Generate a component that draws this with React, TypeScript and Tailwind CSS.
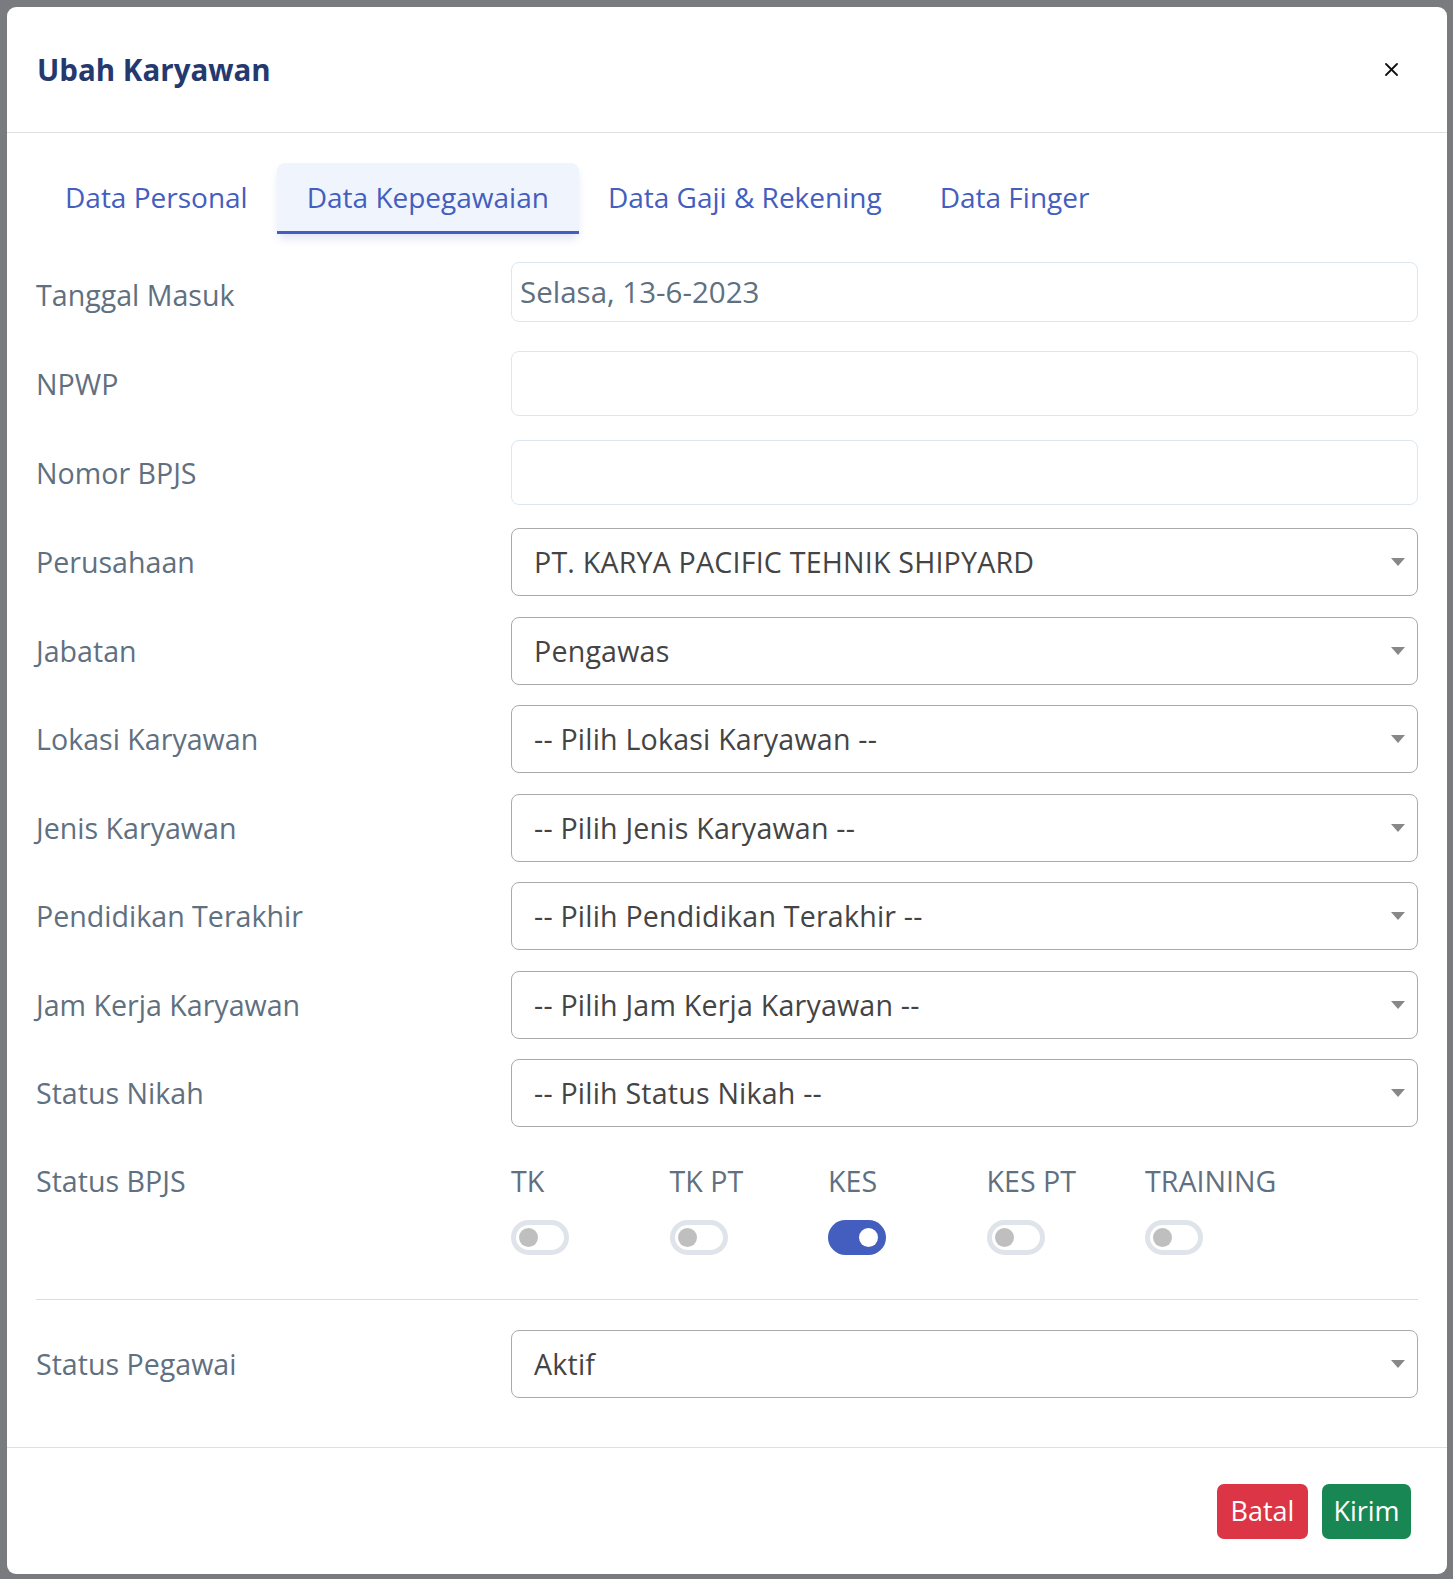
import React from "react";

const Caret = () => (
  <svg width="14" height="8" viewBox="0 0 14 8" className="shrink-0">
    <polygon points="0,0 14,0 7,8" fill="#888888" />
  </svg>
);

const Label = ({ children, className = "" }: { children: React.ReactNode; className?: string }) => (
  <div className={"w-[475px] shrink-0 text-[28.6px] leading-[38px] text-[#607080] " + className}>{children}</div>
);

const Select = ({ value, className = "" }: { value: string; className?: string }) => (
  <div
    className={
      "flex h-[68px] flex-1 items-center rounded-[8px] border border-[#aaaaaa] bg-white pl-[22px] pr-[12px] " + className
    }
  >
    <span className="flex-1 truncate text-[28.6px] leading-[38px] tracking-[0.2px] text-[#444444]">{value}</span>
    <Caret />
  </div>
);

const SelectRow = ({ label, value }: { label: string; value: string }) => (
  <div className="mt-[20.5px] flex items-center">
    <Label>{label}</Label>
    <Select value={value} />
  </div>
);

const Switch = ({ on }: { on?: boolean }) =>
  on ? (
    <div className="flex h-[35px] w-[58px] items-center justify-end rounded-full bg-[#435ebe] pr-[8px]">
      <div className="h-[19px] w-[19px] rounded-full bg-white" />
    </div>
  ) : (
    <div className="flex h-[35px] w-[58px] items-center rounded-full border-[5px] border-[#dfe3ea] bg-white pl-[3px]">
      <div className="h-[19px] w-[19px] rounded-full bg-[#bfbfbf]" />
    </div>
  );

export default function App() {
  const tabs = ["Data Personal", "Data Kepegawaian", "Data Gaji & Rekening", "Data Finger"];
  const bpjs: [string, boolean][] = [
    ["TK", false],
    ["TK PT", false],
    ["KES", true],
    ["KES PT", false],
    ["TRAINING", false],
  ];
  return (
    <div className="h-[1579px] w-[1453px] overflow-hidden bg-[#797b7f] p-[7px] font-['Open_Sans','Noto_Sans',sans-serif]">
      <div className="flex h-[1567px] w-[1440px] flex-col overflow-hidden rounded-[9px] bg-white">
        {/* Header */}
        <div className="flex h-[126px] shrink-0 items-center justify-between border-b border-[#e0e0e0] pl-[30px] pr-[49px]">
          <h5 className="text-[29.5px] font-bold leading-[40px] text-[#25396f]">Ubah Karyawan</h5>
          <svg width="13" height="13" viewBox="0 0 13 13">
            <path d="M1 1 L12 12 M12 1 L1 12" stroke="#111" strokeWidth="1.8" strokeLinecap="round" />
          </svg>
        </div>

        {/* Body */}
        <div className="flex flex-1 flex-col px-[29px] pt-[30px]">
          <div className="flex h-[71px]">
            {tabs.map((t, i) =>
              i === 1 ? (
                <div
                  key={t}
                  className="flex items-center rounded-t-[8px] border-b-[3px] border-[#435ebe] bg-[#f0f4fd] px-[30px] text-[28px] text-[#435ebe] shadow-[0_6px_10px_-2px_rgba(67,94,190,0.18)]"
                >
                  {t}
                </div>
              ) : (
                <div
                  key={t}
                  className="flex items-center border-b-[3px] border-transparent px-[29px] text-[28px] text-[#435ebe]"
                >
                  {t}
                </div>
              )
            )}
          </div>

          <div className="mt-[28px] flex items-start">
            <Label className="mt-[14px]">Tanggal Masuk</Label>
            <div className="flex h-[60px] flex-1 items-center rounded-[8px] border border-[#dce7f1] bg-white pl-[8px] text-[29.5px] text-[#607080]">
              Selasa, 13-6-2023
            </div>
          </div>

          <div className="mt-[29px] flex items-center">
            <Label>NPWP</Label>
            <div className="h-[65px] flex-1 rounded-[8px] border border-[#dce7f1] bg-white" />
          </div>

          <div className="mt-[24px] flex items-center">
            <Label>Nomor BPJS</Label>
            <div className="h-[65px] flex-1 rounded-[8px] border border-[#dce7f1] bg-white" />
          </div>

          <div className="mt-[23px] flex items-center">
            <Label>Perusahaan</Label>
            <Select value="PT. KARYA PACIFIC TEHNIK SHIPYARD" />
          </div>
          <SelectRow label="Jabatan" value="Pengawas" />
          <SelectRow label="Lokasi Karyawan" value="-- Pilih Lokasi Karyawan --" />
          <SelectRow label="Jenis Karyawan" value="-- Pilih Jenis Karyawan --" />
          <SelectRow label="Pendidikan Terakhir" value="-- Pilih Pendidikan Terakhir --" />
          <SelectRow label="Jam Kerja Karyawan" value="-- Pilih Jam Kerja Karyawan --" />
          <SelectRow label="Status Nikah" value="-- Pilih Status Nikah --" />

          <div className="mt-[34.5px] flex items-start">
            <Label>Status BPJS</Label>
            <div className="flex">
              {bpjs.map(([name, on]) => (
                <div key={name} className="flex w-[158.5px] flex-col items-start">
                  <div className="text-[28.6px] leading-[38px] text-[#607080]">{name}</div>
                  <div className="mt-[20px]">
                    <Switch on={on} />
                  </div>
                </div>
              ))}
            </div>
          </div>

          <div className="mt-[44px] h-px bg-[#dcdcdc]" />

          <div className="mt-[30px] flex items-center">
            <Label>Status Pegawai</Label>
            <Select value="Aktif" />
          </div>
        </div>

        {/* Footer */}
        <div className="flex h-[127px] shrink-0 items-center justify-end gap-[14px] border-t border-[#e0e0e0] pr-[36px]">
          <button className="flex h-[55px] w-[91px] items-center justify-center rounded-[7px] bg-[#dc3545] text-[27px] text-white">
            Batal
          </button>
          <button className="flex h-[55px] w-[89px] items-center justify-center rounded-[7px] bg-[#198754] text-[27px] text-white">
            Kirim
          </button>
        </div>
      </div>
    </div>
  );
}
